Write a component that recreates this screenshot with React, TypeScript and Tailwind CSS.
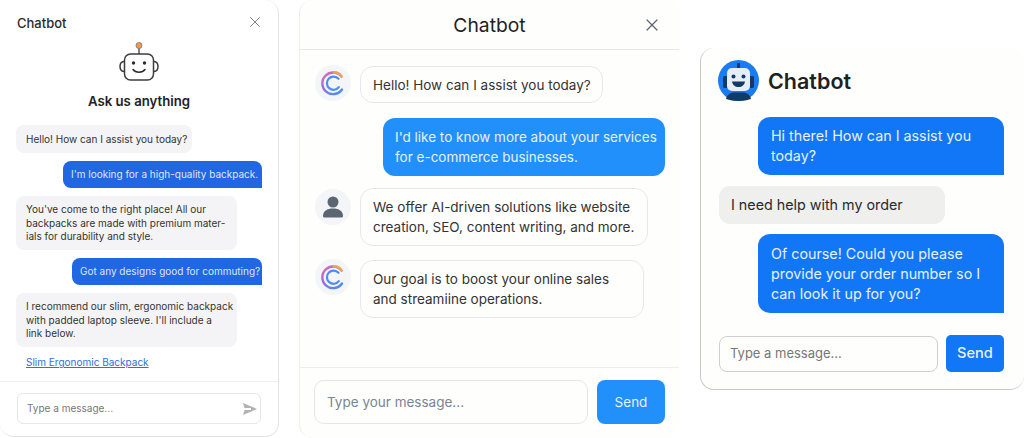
import { ReactNode } from "react";
import { X } from "lucide-react";

const inter = "font-['Inter','Noto_Sans',sans-serif]";

function OutlineBot() {
  return (
    <svg width="42" height="42" viewBox="0 0 42 42" fill="none">
      <path d="M21 6v7" stroke="#4b4b4b" strokeWidth="1.4" />
      <circle cx="21" cy="4.500" r="3" fill="#f2994a" stroke="#6b6b6b" strokeWidth="0.7" />
      <rect x="6.500" y="13" width="29" height="26" rx="6" fill="#fff" stroke="#3d3d3d" strokeWidth="1.500" />
      <path d="M6.500 20.500c-3 0-4.500 2-4.500 5s1.500 5 4.500 5M35.500 20.500c3 0 4.500 2 4.500 5s-1.500 5-4.500 5" stroke="#3d3d3d" strokeWidth="1.500" />
      <circle cx="15.500" cy="22" r="1.700" fill="#2b2b2b" />
      <circle cx="26.500" cy="22" r="1.700" fill="#2b2b2b" />
      <path d="M15 28.500c2.500 3.500 9.500 3.500 12 0" stroke="#2b2b2b" strokeWidth="1.500" strokeLinecap="round" />
    </svg>
  );
}

function RingLogo() {
  return (
    <svg width="36" height="36" viewBox="0 0 36 36" fill="none" className="-mt-[1px] shrink-0">
      <defs>
        <linearGradient id="ringA" x1="8" y1="8" x2="26" y2="28" gradientUnits="userSpaceOnUse">
          <stop offset="0" stopColor="#e86fa0" />
          <stop offset="0.35" stopColor="#a866e0" />
          <stop offset="1" stopColor="#4a8df5" />
        </linearGradient>
      </defs>
      <circle cx="18" cy="18" r="18" fill="#f3f5f9" />
      <path d="M26.500 11.500A10.800 10.800 0 1 0 27 24.500" stroke="url(#ringA)" strokeWidth="2.400" strokeLinecap="round" />
      <path d="M23.500 13.800A6.600 6.600 0 1 0 23.800 22.200" stroke="#4a8df5" strokeWidth="2.200" strokeLinecap="round" />
      <path d="M19 7.300c3.200 0 6 1.600 7.500 4.200" stroke="#f2a25c" strokeWidth="2.400" strokeLinecap="round" />
    </svg>
  );
}

function PersonAvatar() {
  return (
    <svg width="36" height="36" viewBox="0 0 36 36" className="mt-[1px] shrink-0">
      <circle cx="18" cy="18" r="18" fill="#f3f5f9" />
      <circle cx="18" cy="13" r="5.500" fill="#5b6672" />
      <path d="M8 27c0-5 4-7.500 10-7.500S28 22 28 27c0 1-.8 1.500-2 1.500H10c-1.200 0-2-.5-2-1.500z" fill="#5b6672" />
    </svg>
  );
}

function BlueBot() {
  return (
    <svg width="41" height="41" viewBox="0 0 41 41">
      <circle cx="20.500" cy="20.500" r="20.500" fill="#1a7cf0" />
      <rect x="19" y="3" width="3" height="6" fill="#123a66" />
      <path d="M6 16h3v12H6a2 2 0 0 1-1-2v-8a2 2 0 0 1 1-2zM32 16h3a2 2 0 0 1 1 2v8a2 2 0 0 1-1 2h-3z" fill="#123a66" />
      <rect x="9" y="8" width="23" height="23" rx="5" fill="#e6edf5" />
      <circle cx="15.500" cy="16.500" r="2" fill="#123a66" />
      <circle cx="25.500" cy="16.500" r="2" fill="#123a66" />
      <path d="M14 21.500h13c-.5 3.500-3 5.500-6.500 5.500S14.500 25 14 21.500z" fill="#123a66" />
      <path d="M8 39c1-4 4-6.500 8-6.500h9c4 0 7 2.500 8 6.500-3.500 1.300-8 2-12.500 2S11.500 40.300 8 39z" fill="#123a66" />
    </svg>
  );
}

function LeftBubble({ children }: { children: ReactNode }) {
  return <div className="h-[54px] w-[221px] whitespace-nowrap rounded-[8px] bg-[#f4f4f6] px-[10px] py-[7px] text-[10px] leading-[13.500px] text-[#333]">{children}</div>;
}

function RightBubble({ children, w }: { children: ReactNode; w: string }) {
  return <div className={`${w} h-[27px] self-end whitespace-nowrap rounded-l-[8px] rounded-tr-[8px] bg-[#2166e2] py-[7px] pl-[8px] text-[10px] leading-[13px] text-[#dbe6fb]`}>{children}</div>;
}

function SmallCard() {
  return (
    <div className="flex h-[437px] w-[279px] shrink-0 flex-col rounded-r-[14px] rounded-bl-[14px] border-r border-b border-[#e4e4e6] bg-white">
      <div className="flex h-[32px] items-center justify-between pt-[12px] pr-[14px] pl-[17px]">
        <span className="mt-[2px] text-[13px] leading-[16px] font-medium text-[#2a2a2a]">Chatbot</span>
        <X className="h-[18px] w-[18px] text-[#808080]" strokeWidth={1.3} />
      </div>
      <div className="mt-[9px] flex flex-col items-center">
        <OutlineBot />
        <span className="mt-[10px] text-[13.200px] leading-[16px] font-semibold text-[#222]">Ask us anything</span>
      </div>
      <div className="mt-[16px] flex flex-1 flex-col gap-[8px] pr-[16px] pl-[16px]">
        <div className="h-[28px] w-[176px] whitespace-nowrap rounded-[8px] bg-[#f4f4f6] px-[10px] py-[7px] text-[10px] leading-[14px] text-[#333]">Hello! How can I assist you today?</div>
        <RightBubble w="w-[199px]">I'm looking for a high-quality backpack.</RightBubble>
        <LeftBubble>
          You've come to the right place! All our<br />backpacks are made with premium mater-<br />ials for durability and style.
        </LeftBubble>
        <RightBubble w="w-[190px]">Got any designs good for commuting?</RightBubble>
        <LeftBubble>
          I recommend our slim, ergonomic backpack<br />with padded laptop sleeve. I'll include a<br />link below.
        </LeftBubble>
        <a className="ml-[10px] self-start text-[10px] leading-[14px] text-[#2f6fe4] underline">Slim Ergonomic Backpack</a>
      </div>
      <div className="border-t border-[#eeeeee] px-[17px] pt-[11px] pb-[12px]">
        <div className="flex h-[31px] items-center justify-between rounded-[6px] border border-[#e6e6e6] pr-[3px] pl-[9px]">
          <span className="text-[10px] text-[#777]">Type a message...</span>
          <svg width="14" height="12" viewBox="0 0 14 12">
            <path d="M0 0l14 6-14 6 1.500-5H8V5H1.500z" fill="#b2b2b2" />
          </svg>
        </div>
      </div>
    </div>
  );
}

function OutlinedBubble({ children, w }: { children: ReactNode; w: string }) {
  return <div className={`${w} whitespace-nowrap rounded-[13px] border border-[#e5e9ef] bg-[#fefefd] px-[12px] py-[8px] text-[13.500px] leading-[20px] text-[#333]`}>{children}</div>;
}

function MiddleCard() {
  return (
    <div className="ml-[20px] flex h-[438px] w-[380px] shrink-0 flex-col rounded-[14px] border-l border-[#eeeeee] bg-[#fefefd]">
      <div className="relative flex h-[50px] shrink-0 items-center justify-center border-b border-[#e6e8ec] pt-[1px]">
        <span className="text-[19.300px] text-[#222]">Chatbot</span>
        <X className="absolute top-[15px] right-[17px] h-[20px] w-[20px] text-[#5f6670]" strokeWidth={1.5} />
      </div>
      <div className="flex flex-1 flex-col pt-[16px] pr-[14px] pl-[15px]">
        <div className="flex gap-[9px]">
          <RingLogo />
          <OutlinedBubble w="w-[243px]">
            <div className="-my-[1px] pt-[1px]">Hello! How can I assist you today?</div>
          </OutlinedBubble>
        </div>
        <div className="mt-[15px] w-[282px] self-end whitespace-nowrap rounded-[12px] bg-[#2290fb] px-[12px] py-[9px] text-[13.500px] leading-[20px] text-[#e4f1fe]">
          I'd like to know more about your services<br />for e-commerce businesses.
        </div>
        <div className="mt-[12px] flex gap-[9px]">
          <PersonAvatar />
          <OutlinedBubble w="w-[288px]">We offer AI-driven solutions like website<br />creation, SEO, content writing, and more.</OutlinedBubble>
        </div>
        <div className="mt-[14px] flex gap-[9px]">
          <RingLogo />
          <OutlinedBubble w="w-[284px]">Our goal is to boost your online sales<br />and streamiine operations.</OutlinedBubble>
        </div>
      </div>
      <div className="flex gap-[9px] border-t border-[#eceef1] pt-[12px] pr-[14px] pb-[14px] pl-[14px]">
        <div className="flex h-[44px] w-[274px] items-center rounded-[10px] border border-[#e2e6ec] px-[12px] text-[13.500px] text-[#7a8594]">Type your message...</div>
        <div className="flex h-[44px] w-[68px] items-center justify-center rounded-[8px] bg-[#2290fb] text-[13.500px] text-[#e4f1fe]">Send</div>
      </div>
    </div>
  );
}

function BlueBubble({ children, mt }: { children: ReactNode; mt: string }) {
  return <div className={`${mt} w-[246px] self-end whitespace-nowrap rounded-l-[12px] rounded-tr-[12px] bg-[#1277f6] px-[13px] py-[9px] text-[14.300px] leading-[20px] text-[#e6f0fe]`}>{children}</div>;
}

function RightCard() {
  return (
    <div className="mt-[48px] ml-[21px] flex h-[342px] w-[324px] shrink-0 flex-col rounded-[14px] border-b border-l border-[#c9c9c9] bg-[#fefefd] pr-[20px] pl-[18px]">
      <div className="mt-[12px] -ml-[1px] flex items-center gap-[9px]">
        <BlueBot />
        <span className="text-[21.500px] leading-[28px] font-semibold text-[#1f1f1f]">Chatbot</span>
      </div>
      <BlueBubble mt="mt-[16px]">Hi there! How can I assist you<br />today?</BlueBubble>
      <div className="mt-[11px] flex h-[38px] w-[226px] items-center rounded-[11px] bg-[#efefee] px-[12px] text-[14.300px] text-[#2a2a2a]">I need help with my order</div>
      <BlueBubble mt="mt-[10px]">
        <div className="pt-[1px]">Of course! Could you please<br />provide your order number so I<br />can look it up for you?</div>
      </BlueBubble>
      <div className="mt-[22px] flex items-start gap-[8px]">
        <div className="mt-[1px] flex h-[36px] w-[219px] items-center rounded-[8px] border border-[#cfcfcf] px-[10px] text-[13px] text-[#777]">Type a message...</div>
        <div className="flex h-[37px] w-[58px] items-center justify-center rounded-[5px] bg-[#1277f6] text-[14.600px] font-medium text-[#e6f0fe]">Send</div>
      </div>
    </div>
  );
}

export default function App() {
  return (
    <div className={`${inter} flex h-[438px] w-[1024px] items-start overflow-hidden bg-white`}>
      <SmallCard />
      <MiddleCard />
      <RightCard />
    </div>
  );
}
